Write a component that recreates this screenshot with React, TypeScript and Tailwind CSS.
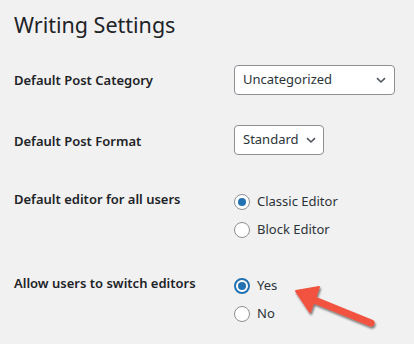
import React from "react";

function Select({ value, width }: { value: string; width: string }) {
  return (
    <div
      className={`flex h-[30px] ${width} items-center justify-between rounded-[4px] border border-[#8c8f94] bg-white pl-[8px] pr-[7px] text-[13px] text-[#2c3338]`}
    >
      <span className="whitespace-nowrap">{value}</span>
      <svg width="12" height="12" viewBox="0 0 12 12" className="ml-[6px] shrink-0">
        <path d="M2 4.2 L6 8 L10 4.2" fill="none" stroke="#50575e" strokeWidth="1.6" />
      </svg>
    </div>
  );
}

function Radio({ label, checked, focused }: { label: string; checked?: boolean; focused?: boolean }) {
  return (
    <div className="flex h-[28px] items-center text-[13px] text-[#2c3338]">
      <span
        className={`relative mr-[7px] flex h-[16px] w-[16px] shrink-0 items-center justify-center rounded-full bg-white ${
          focused ? "border-2 border-[#2271b1]" : "border border-[#8c8f94]"
        }`}
      >
        {checked && <span className="h-[8px] w-[8px] rounded-full bg-[#2271b1]" />}
      </span>
      <span>{label}</span>
    </div>
  );
}

export default function App() {
  return (
    <div
      className="relative h-[344px] w-[414px] overflow-hidden bg-[#f1f1f1] px-[14px] text-[#1d2327]"
      style={{ fontFamily: '"Noto Sans", "Open Sans", sans-serif' }}
    >
      <h1 className="pt-[10px] text-[21.5px] font-normal leading-[30px]">Writing Settings</h1>

      <div className="mt-[10px]">
        {/* Default Post Category */}
        <div className="grid grid-cols-[220px_1fr]">
          <div className="pt-[20px] text-[13px] font-semibold leading-[20px]">Default Post Category</div>
          <div className="pt-[15px] pb-[15px]">
            <Select value="Uncategorized" width="w-[161px]" />
          </div>
        </div>

        {/* Default Post Format */}
        <div className="grid grid-cols-[220px_1fr]">
          <div className="pt-[21px] text-[13px] font-semibold leading-[20px]">Default Post Format</div>
          <div className="pt-[15px] pb-[15px]">
            <Select value="Standard" width="w-[90px]" />
          </div>
        </div>

        {/* Default editor */}
        <div className="grid grid-cols-[220px_1fr]">
          <div className="pt-[19px] text-[13px] font-semibold leading-[20px]">Default editor for all users</div>
          <div className="pt-[18px] pb-[9px]">
            <Radio label="Classic Editor" checked />
            <Radio label="Block Editor" />
          </div>
        </div>

        {/* Switch editors */}
        <div className="grid grid-cols-[220px_1fr]">
          <div className="pt-[20px] text-[13px] font-semibold leading-[20px]">Allow users to switch editors</div>
          <div className="pt-[19px]">
            <Radio label="Yes" checked focused />
            <Radio label="No" />
          </div>
        </div>
      </div>

      {/* annotation arrow */}
      <svg className="absolute left-0 top-0" width="414" height="344" viewBox="0 0 414 344">
        <defs>
          <filter id="sh" x="-20%" y="-20%" width="140%" height="160%">
            <feDropShadow dx="1" dy="2" stdDeviation="1.2" floodColor="#000" floodOpacity="0.55" />
          </filter>
        </defs>
        <g filter="url(#sh)" fill="#f2523f" stroke="#f2523f">
          <line x1="312" y1="299" x2="371" y2="323" strokeWidth="7" strokeLinecap="round" />
          <polygon points="296,291 319,287 310,312" strokeWidth="2" strokeLinejoin="round" />
        </g>
      </svg>
    </div>
  );
}
